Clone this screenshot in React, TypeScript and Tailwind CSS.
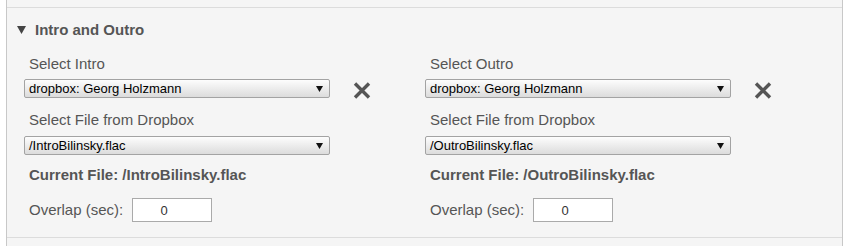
import React from "react";

interface ColumnProps {
  selectLabel: string;
  fileName: string;
}

const Arrow = () => (
  <svg className="absolute right-[6px] top-[6px]" width="7" height="6" viewBox="0 0 7 6">
    <path d="M0 0 H7 L3.5 6 Z" fill="#111" />
  </svg>
);

const FakeSelect = ({ value }: { value: string }) => (
  <div className="relative h-[19px] w-[306px] rounded-[2px] border border-[#a3a3a3] bg-gradient-to-b from-[#fdfdfd] to-[#dcdcdc] pl-[4px] text-[13px] leading-[17px] text-black">
    {value}
    <Arrow />
  </div>
);

const RemoveIcon = () => (
  <svg width="18" height="17" viewBox="0 0 18 17" className="ml-[23px] mt-[3px]">
    <path d="M2 1.5 L16 15.5 M16 1.5 L2 15.5" stroke="#555" strokeWidth="3.4" />
  </svg>
);

const Column: React.FC<ColumnProps> = ({ selectLabel, fileName }) => {
  return (
    <div className="w-[401px] flex flex-col">
      <div className="pl-[5px] h-[20px] leading-[20px] text-[15px] text-[#555]">{selectLabel}</div>
      <div className="mt-[5px] flex items-start">
        <FakeSelect value="dropbox: Georg Holzmann" />
        <RemoveIcon />
      </div>
      <div className="mt-[11px] pl-[5px] h-[20px] leading-[20px] text-[15px] text-[#555]">Select File from Dropbox</div>
      <div className="mt-[6px]">
        <FakeSelect value={fileName} />
      </div>
      <div className="mt-[10px] pl-[5px] h-[20px] leading-[20px] text-[15px] font-bold text-[#555]">
        Current File: {fileName}
      </div>
      <div className="mt-[13px] pl-[5px] flex items-center h-[24px]">
        <span className="text-[15px] leading-[20px] text-[#555]">Overlap (sec):</span>
        <input
          className="ml-[9px] h-[24px] w-[80px] border border-[#aaa] bg-white pr-[16px] text-center text-[13px] text-[#333] outline-none"
          defaultValue="0"
        />
      </div>
    </div>
  );
};

export default function App() {
  return (
    <div className="w-[848px] h-[246px] bg-white font-['Liberation_Sans',Arial,sans-serif] overflow-hidden">
      <div className="ml-[6px] w-[837px] h-full border-x border-[#c8c8c8] bg-[#f5f5f5] flex flex-col">
        <div className="h-[8px] border-b border-[#dcdcdc]" />
        <div className="mt-[12px] pl-[10px] h-[20px] flex items-center text-[15px] font-bold text-[#555]">
          <svg width="9" height="8" viewBox="0 0 9 8" className="mr-[9px]">
            <path d="M0 0 H9 L4.5 8 Z" fill="#444" />
          </svg>
          Intro and Outro
        </div>
        <div className="mt-[14px] pl-[17px] flex">
          <Column selectLabel="Select Intro" fileName="/IntroBilinsky.flac" />
          <Column selectLabel="Select Outro" fileName="/OutroBilinsky.flac" />
        </div>
        <div className="mt-[15px] border-b border-[#dcdcdc]" />
      </div>
    </div>
  );
}
